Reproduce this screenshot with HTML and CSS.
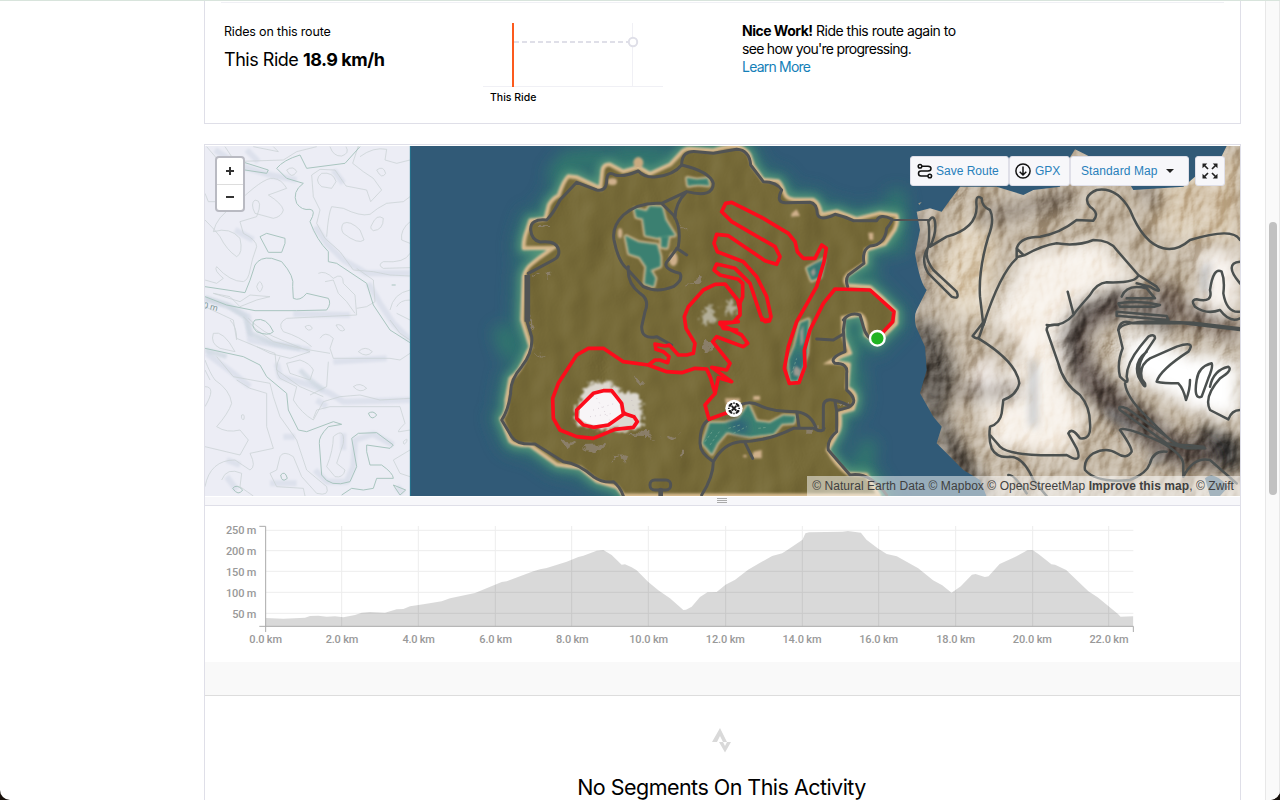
FILE: index.html
```html
<!DOCTYPE html>
<html lang="en">
<head>
<meta charset="utf-8">
<title>Activity</title>
<link rel="stylesheet" href="styles.css">
</head>
<body>
<div class="window">
<main class="content">
  <section class="card matched">
    <div class="rides">
      <p class="label">Rides on this route</p>
      <p class="speed">This Ride <b>18.9 km/h</b></p>
    </div>
    <div class="trend">
      <svg width="180" height="66" viewBox="0 0 180 66">
        <path d="M0 64.5H180" stroke="#f0f0f5"/>
        <path d="M149.5 1V64" stroke="#f0f0f5"/>
        <path d="M31 20H145" stroke="#dfdfe8" stroke-width="2" stroke-dasharray="5 3"/>
        <path d="M30 1V65" stroke="#fc5a1d" stroke-width="2"/>
        <circle cx="150" cy="20" r="4.2" fill="#fff" stroke="#dfdfe8" stroke-width="2"/>
      </svg>
      <span class="tick">This Ride</span>
    </div>
    <div class="message"><span class="m1"><b>Nice Work!</b> Ride this route again to</span><span class="m2">see how you're progressing.</span><a class="m3">Learn More</a></div>
  </section>

  <section class="card activity">
    <div class="map">
      <svg class="terrain" viewBox="-825 18 3105 1050" width="1035" height="350">
        <defs>
          <filter id="b4" x="-20%" y="-20%" width="140%" height="140%"><feGaussianBlur stdDeviation="3"/></filter>
          <filter id="b15" x="-30%" y="-30%" width="160%" height="160%"><feGaussianBlur stdDeviation="12"/></filter>
          <filter id="b30" x="-50%" y="-50%" width="200%" height="200%"><feGaussianBlur stdDeviation="24"/></filter>
          <filter id="rock" x="0" y="0" width="100%" height="100%" color-interpolation-filters="sRGB">
            <feTurbulence type="fractalNoise" baseFrequency=".008 .0055" numOctaves="4" seed="8"/>
            <feColorMatrix values="0 0 0 0 0  0 0 0 0 0  0 0 0 0 0  1 0 0 0 0"/>
            <feDiffuseLighting surfaceScale="36" diffuseConstant="1.08" lighting-color="#ffffff"><feDistantLight azimuth="220" elevation="34"/></feDiffuseLighting>
          </filter>
          <filter id="grass" x="0" y="0" width="100%" height="100%" color-interpolation-filters="sRGB">
            <feTurbulence type="fractalNoise" baseFrequency=".01 .008" numOctaves="2" seed="3"/>
            <feColorMatrix values="0 0 0 0 0  0 0 0 0 0  0 0 0 0 0  1 0 0 0 0"/>
            <feDiffuseLighting surfaceScale="7" diffuseConstant="1" lighting-color="#ffffff"><feDistantLight azimuth="200" elevation="30"/></feDiffuseLighting>
          </filter>
          <filter id="snow" x="-10%" y="-10%" width="120%" height="120%">
            <feTurbulence type="fractalNoise" baseFrequency=".1" numOctaves="2" seed="4" result="n"/>
            <feDisplacementMap in="SourceGraphic" in2="n" scale="45" xChannelSelector="R" yChannelSelector="G"/>
            <feGaussianBlur stdDeviation="2.500"/>
          </filter>
          <filter id="rough" x="-10%" y="-10%" width="120%" height="120%">
            <feTurbulence type="fractalNoise" baseFrequency=".035" numOctaves="3" seed="9" result="n"/>
            <feDisplacementMap in="SourceGraphic" in2="n" scale="40" xChannelSelector="R" yChannelSelector="G"/>
            <feGaussianBlur stdDeviation="1.500"/>
          </filter>
          <path id="isle" d="M125 540L130 410Q135 385 155 370L180 350L215 325L130 326Q128 300 140 270L150 240L195 235L205 195Q215 175 235 165Q250 120 265 107L290 110L360 143L366 90Q370 70 390 72L430 93L475 80L510 100L570 72L600 40Q610 25 630 25L700 30Q735 18 770 18Q800 25 810 45L820 75L850 118L895 122Q905 130 915 160Q920 175 940 177L1000 178Q1020 190 1025 222L1070 213Q1100 225 1130 235L1200 218L1250 225Q1258 240 1245 270L1215 313L1160 330L1158 370L1105 405Q1090 420 1103 435L1170 440L1205 470L1250 515L1250 550L1190 610L1155 585Q1160 535 1140 525L1090 535L1092 590L1112 640Q1080 650 1055 665Q1080 665 1108 672L1103 742Q1130 755 1128 780L1120 808L1080 820Q1085 860 1075 877L1045 930Q1070 975 1105 1000L1160 1003L1200 1068H430L410 1043L350 1025L300 985L230 975L150 917Q110 920 90 905L62 835Q80 820 78 780L90 715Q120 695 140 640L150 620Z"/>
          <path id="range" d="M1310 215L1350 205L1385 215L1410 180L1440 140L1550 140L1630 165L1660 150L1740 140L1765 60L1785 28L1820 45L1860 68L1900 48L1925 90L1960 150L2110 140L2180 80L2225 48L2240 18H2285V1070H1520L1500 1020L1450 990L1370 910L1385 860L1360 830L1320 760L1340 690L1335 620L1308 560Q1300 530 1310 510L1340 450Q1320 430 1305 340L1320 270Z"/>
          <clipPath id="isleClip"><use href="#isle"/></clipPath>
          <clipPath id="rangeClip"><use href="#range"/></clipPath>
          <clipPath id="topoClip"><rect x="-825" y="18" width="615" height="1050"/></clipPath>
          <clipPath id="seaClip"><rect x="-210" y="18" width="2490" height="1050"/></clipPath>
        </defs>

        <rect x="-210" y="18" width="2490" height="1050" fill="#315a77"/>

        <!-- paper map west of the island -->
        <g clip-path="url(#topoClip)">
        <g transform="translate(-840 0)" fill="none">
          <rect x="15" y="18" width="615" height="1050" fill="#ecedf5"/>
          <g stroke="#dde1ec" stroke-width="18" stroke-linejoin="round" filter="url(#b4)">
            <path d="M130 80L210 105L290 120M345 260L380 310L430 360L500 400L630 400M15 475L90 500L145 530L150 600L230 615L330 630M20 640L100 700L150 740M230 670L240 710L330 735L390 760L430 785L630 780M505 430L540 490L580 550L630 600M280 522L450 525M400 665L560 655M400 90L430 130M345 990L380 1025L440 1025L460 980L465 900L520 882L580 915M430 880V930M210 1030H290M250 890H285M80 960L120 975M45 30L100 65M140 30L175 65M80 1010L110 1050M590 1040L610 1060M105 270L160 300M350 780L380 800"/>
          </g>
          <path d="M15 475L80 495L135 530L150 580L220 610L300 625M300 690L330 720L370 750M15 630L80 650" stroke="#cdd7e0" stroke-width="15" opacity=".7" filter="url(#b4)"/>
          <g stroke="#cbd3d6" stroke-width="2.4" stroke-linejoin="round">
            <path d="M20 20L50 55L95 65L250 60L290 35L350 20M390 20Q400 50 425 48Q450 40 438 20M75 20L95 50M160 20L235 35L220 20M475 18L458 70L490 95L520 115L545 150L512 185L500 150L438 138L405 90L360 88L335 105L340 170L360 210L350 250L375 295L420 335L460 390L520 395L570 405L630 408M480 50Q520 20 560 28L555 60L590 70L630 60"/>
            <path d="M365 100Q400 95 408 125L395 145L365 140Q340 120 365 100ZM530 90Q550 75 557 100Q545 120 530 90ZM260 90Q280 75 290 95Q275 120 260 90ZM430 250Q450 240 480 270L492 300Q475 315 430 280Q420 265 430 250ZM515 255Q530 220 550 235Q550 270 520 272Q508 265 515 255ZM170 440Q180 410 188 440Q180 470 170 440ZM315 560Q330 550 337 565Q325 578 315 560ZM408 555Q425 550 434 570Q420 580 408 555ZM475 635Q495 615 517 635Q500 655 475 635ZM460 740Q480 725 500 745Q480 762 460 740ZM125 825Q135 820 132 838Q122 840 125 825Z"/>
            <path d="M15 160L25 185L50 185M15 240Q45 270 60 290Q80 330 110 350Q130 340 120 295Q90 260 40 275Q50 230 100 200Q190 110 220 115Q245 118 260 145L205 165Q245 190 250 210Q245 230 220 235L165 220Q150 190 165 180Q190 180 170 230L120 245L130 280Q170 300 170 320Q155 360 150 390Q145 420 130 425Q90 425 50 380Q40 390 70 415L50 430L15 420"/>
            <path d="M380 290Q385 220 395 200L430 205Q480 230 510 223Q530 205 560 190L610 185L630 170M630 245Q600 270 605 300L630 310M630 340Q615 370 550 365Q530 375 550 385L630 383M355 400Q375 390 400 415Q430 395 430 430L465 465L470 525L260 535Q230 550 250 575Q300 590 335 620M375 425L400 420L415 460L440 485L465 520M470 505L500 500L525 485L520 420L470 385M570 510Q580 460 630 450M590 500Q600 480 630 480M590 520L630 540M570 540L600 580L630 600"/>
            <path d="M40 460L90 470L120 500L170 480L210 470L150 465L120 485L40 460M130 530L170 570L220 605L300 625L390 640M90 540Q110 560 110 595L170 620L225 640L230 690L300 740L370 770M145 535Q190 580 245 600L330 635L270 655L210 640L170 620M260 670L300 660Q330 670 340 690L330 720L270 700ZM240 650Q220 690 240 715L290 740L280 780Q305 820 340 840L370 785L420 770L480 765L540 780L630 775M360 595Q375 570 400 595L390 625L400 655L570 655L600 660L630 640M385 665L380 740L330 765M40 580Q70 570 105 635L60 625Q30 610 40 580M15 660Q30 700 45 720Q90 750 95 790Q85 820 50 860Q80 880 120 870L145 900L120 945L15 920"/>
            <path d="M15 740Q50 740 15 800M110 720L150 745L200 760L200 860L220 925L150 940Q170 980 150 990L105 960Q30 960 15 1040M50 650L100 710L210 730L220 770L240 830L290 900L320 990L380 1040Q390 1070 350 1060L305 1010L280 950Q250 930 240 950L230 990L210 1000L230 1040L310 1045L315 1068M65 1020Q80 980 125 1000L120 1040L160 1068M340 835L350 810L390 800L600 800L615 850Q585 880 600 875L630 870M630 930L580 960L600 1000L630 1010M610 905Q625 890 620 905Q610 920 610 905ZM380 980Q400 930 400 890Q435 860 430 910L410 970L435 990Q430 1015 405 1010ZM15 500L100 540L110 600M15 690L30 720"/>
          </g>
          <g stroke="#a9c5bf" stroke-width="3" stroke-linejoin="round">
            <path d="M480 20L435 70L320 85L300 45Q250 60 230 85L260 115L310 130Q275 155 290 190Q305 212 330 208Q350 210 330 245Q350 300 385 335L385 365L410 370L500 430L520 495L570 570L630 608M135 68L205 90L200 100L135 90M15 440L135 458Q150 425 165 375Q180 350 215 355L245 365Q285 410 278 440L280 475Q300 485 320 460L385 475Q395 490 380 510L290 512L165 512L80 495L15 470"/>
            <path d="M180 290L200 280L255 295L255 310L245 337L205 337ZM165 540Q200 530 220 575Q205 590 170 575Q150 555 165 540ZM15 625L130 650L180 675L200 710L260 760L265 810L295 870L320 875L400 845L425 853L385 860Q355 890 358 910L365 1005Q390 1045 450 1025L470 980L455 895L475 880L530 878L580 915L570 925L500 915L500 935L510 975L545 975Q580 1000 580 1015L530 1015L520 1045L490 1050L455 1045L425 1065M505 820Q520 810 530 825Q515 845 505 820ZM242 1005Q255 990 262 1015Q245 1030 242 1005ZM98 1045Q110 1030 128 1050Q115 1070 98 1045ZM580 1035L600 1065L617 1050ZM575 435H587"/>
          </g>
          <text x="8" y="504" transform="rotate(14 12 505)" class="contour">0 m</text>
        </g>
        </g>
        <path d="M-209 18V1068" stroke="#23758f" stroke-width="3"/>

        <!-- shallow water -->
        <g clip-path="url(#seaClip)">
        <g filter="url(#b30)" opacity=".8">
          <use href="#isle" fill="none" stroke="#2d706d" stroke-width="66"/>
          <path d="M215 120L260 60L380 45M400 40L560 45M1250 150V340M60 560L90 650M1170 900L1140 1000L1200 1030M1120 720L1150 700M1110 580L1140 630M1140 390L1190 400" fill="none" stroke="#31806a" stroke-width="50"/>
        </g>
        <use href="#isle" fill="none" stroke="#56997a" stroke-width="28" filter="url(#b15)"/>
        </g>
        <g filter="url(#b4)">
          <use href="#isle" fill="#75663e" stroke="#dcc096" stroke-width="9" stroke-linejoin="round"/>
          <ellipse cx="475" cy="68" rx="15" ry="17" fill="#c9aa80"/>
        </g>
        <g clip-path="url(#isleClip)">
          <rect x="50" y="0" width="1250" height="1080" fill="#766a38"/>
          <rect x="50" y="0" width="1250" height="1080" filter="url(#grass)" style="mix-blend-mode:soft-light" opacity=".55"/>
          <use href="#isle" fill="none" stroke="#d6b98d" stroke-width="15" filter="url(#b4)"/>
        </g>

        <!-- inland lakes and bare ground -->
        <g stroke="#cfb48a" stroke-width="14" fill="#cfb48a" filter="url(#b4)" stroke-linejoin="round">
          <path id="lakes" d="M465 207L500 215L510 200L545 202L555 240L583 285L530 292L497 285L490 235L470 230ZM438 290L475 308L530 315L540 350L540 378L510 390L525 415L520 438L495 430L500 380L480 350L448 340ZM545 290L565 292L560 322L545 320ZM622 115L650 120L682 117L686 135L655 132L625 136ZM980 640L960 700L950 722L932 720L928 660L945 620L962 550L985 540Z"/>
          <path id="basin" d="M670 910L690 850L735 850L775 840L805 795L828 845L870 850L910 828L945 830L940 848L905 850L880 880L810 888L740 875L710 910L695 940Z"/>
          <path d="M982 385L1030 360L1020 410L995 420Z"/>
        </g>
        <g fill="#3b8071" filter="url(#b4)" stroke="#4a8c79" stroke-width="4"><use href="#lakes"/><use href="#basin"/><path d="M982 385L1030 360L1020 410L995 420Z"/></g>
        <g fill="#cfb08b" filter="url(#b4)"><ellipse cx="580" cy="357" rx="13" ry="21"/><ellipse cx="420" cy="280" rx="7" ry="15"/><ellipse cx="397" cy="125" rx="14" ry="10"/><path d="M935 220L950 208L960 228L933 230ZM1165 278H1180V300H1168ZM820 935L845 930V955H815ZM790 945H800V952H790ZM820 768H840V780H820ZM735 775H780V800H740Z"/></g>
        <path d="M745 850L770 838L800 840L805 880L770 880ZM945 640L960 630L968 670L950 712L935 705ZM1000 380L1025 370L1010 410Z" fill="#2f6078" filter="url(#b15)"/>
        <path d="M675 905L700 870M690 915L718 875M745 865L780 855M760 880L800 860M835 865L860 862M935 700L950 655" stroke="#79a793" stroke-width="2" stroke-dasharray="8 6"/>
        <path d="M940 690L948 677L963 690L960 710L942 706ZM960 575L970 555V605L962 620ZM992 395L1003 383L1007 400L998 410Z" fill="#9c9a91" filter="url(#b4)"/>
        <g filter="url(#rough)" fill="#8f8372" opacity=".85">
          <path d="M240 900L280 905L270 930L250 925ZM310 915L385 912L365 932L325 945ZM440 878L500 882L540 895L500 888L460 887ZM620 440L655 400L665 432L635 428L618 450ZM670 640L680 610L706 598L690 630ZM1075 783L1110 783V792H1078ZM560 897L595 883L570 902ZM605 935H615V955H605ZM160 395L175 402L160 410ZM195 395L215 395L205 435V415ZM150 520L160 545L150 565ZM465 700L485 725H470ZM165 630L195 650L180 645ZM180 255L205 255L180 268ZM430 945L445 950L435 975ZM370 1000L400 990ZM600 250L625 285L605 265ZM980 865L1010 862V872H985ZM400 950L430 945L390 965Z"/>
        </g>
        <g filter="url(#snow)"><path d="M290 805L315 745L335 730L390 725L425 755L470 760L485 790L485 865L430 870L340 865L285 850Z" fill="#dcd8d0"/><path d="M665 530L680 505L690 490L702 515L712 545L665 555ZM733 500L757 475L773 520L735 520Z" fill="#b3ae98"/></g>
        <path d="M300 800Q370 725 415 780L425 825Q350 880 300 835Z" fill="#f8f5f7"/>
        <path d="M315 785L365 755M340 810L405 790M330 830L400 820M350 775L395 850M455 780L470 840M380 725L430 755" stroke="#b5a7b5" stroke-width="2" stroke-dasharray="2 13"/>

        <!-- eastern mountains -->
        <g clip-path="url(#rangeClip)">
          <rect x="1290" y="0" width="1000" height="1080" fill="#bdaf9b"/>
          <g filter="url(#b30)">
            <path d="M1640 340L1860 300L1970 420L1860 450L1770 560L1740 720L1820 830L1760 960L1530 920L1500 780L1630 640L1540 540Z" fill="#f6efe6"/>
            <path d="M1980 180L2060 300L2180 300L2280 310V30L2050 120Z" fill="#d3c2a9"/>
            <path d="M2050 330L2160 350L2160 510L2270 510V340Z" fill="#f8f2ec"/>
            <path d="M1470 180L1550 320L1520 540L1420 520L1370 390Z" fill="#ddceb6"/>
            <path d="M1290 540L1370 550L1430 700L1390 830L1540 1070H1470L1350 860L1290 720Z" fill="#4d4741"/>
            <path d="M1420 760L1620 750M1310 220V500M1480 240L1780 170M1980 70L2030 210" fill="none" stroke="#7d7062" stroke-width="45"/>
            <path d="M2080 540L1930 480L1830 520L1780 590L1810 700L1890 780L2080 930L2280 950" fill="none" stroke="#4c413b" stroke-width="80"/>
            <path d="M2030 440L2130 530L2280 580" fill="none" stroke="#6a5a4d" stroke-width="60"/>
            <path d="M1930 580L2000 580L2080 625L2190 650L2280 660V840L2160 820L2050 760L1930 700Z" fill="#ffffff"/>
            <path d="M2150 850L2280 900V1000L2210 970Z" fill="#202123"/>
            <path d="M1480 680L1530 640L1560 740L1480 740Z" fill="#f1eae6"/>
            <path d="M1950 470L2020 450L2040 500L1920 540Z" fill="#a19890"/>
          </g>
          <rect x="1290" y="0" width="1000" height="1080" filter="url(#rock)" style="mix-blend-mode:soft-light" opacity=".75"/>
          <path d="M1660 660V860M2180 460Q2160 400 2190 375M1880 810L1960 870M2010 970L2050 940" stroke="#8793a0" stroke-width="10" fill="none" filter="url(#b15)"/>
          <path d="M2175 1015Q2200 990 2245 1040L2220 1068H2190Z" fill="#49687c"/>
        </g>
        <path d="M1315 190L1325 186L1318 195Z" fill="#a59a89"/>

        <!-- roads -->
        <g fill="none" stroke="#515354" stroke-width="9" stroke-linejoin="round" stroke-linecap="round">
          <path d="M145 400L220 360Q240 350 236 330Q230 300 180 306Q155 300 152 270Q150 235 200 240Q220 220 240 180L290 127L350 150Q378 155 380 125Q380 90 405 105Q430 112 475 93Q495 115 530 110Q580 105 605 75Q605 30 650 35L700 40L770 28Q808 30 812 75L850 125Q890 125 905 150Q885 190 920 188L990 187Q1010 190 1012 222Q1020 245 1065 223Q1095 230 1120 242H1190Q1200 220 1235 237Q1240 240 1220 265Q1215 315 1170 318Q1145 330 1152 370L1105 405Q1095 420 1103 440"/>
          <path d="M1240 240H1345" stroke-width="6"/>
          <path d="M142 405V545" stroke-width="17" stroke-linecap="butt"/>
          <path d="M140 540L155 590Q160 635 125 680Q90 720 92 760Q85 810 65 840L95 890Q110 915 165 912Q210 940 250 965Q295 970 340 1010Q370 1030 400 1025Q420 1040 430 1068"/>
          <path d="M545 190Q475 185 430 225Q395 260 402 300Q415 365 440 385L490 440Q530 460 580 440Q610 420 600 400Q540 385 565 360L595 320Q605 260 580 225ZL620 155Q700 175 700 130Q690 95 605 75M620 155Q585 190 585 235M590 325L620 345M445 380Q440 430 480 460Q510 480 495 515L485 560Q485 600 530 590L575 615"/>
          <g transform="translate(660 540)"><path d="M350 57L400 60L430 42M435 -5L430 30L435 95Q385 115 405 130Q445 130 440 160V210Q480 245 445 262L410 272L410 335Q380 360 385 390L450 465Q510 455 560 525M370 330L370 260Q370 220 450 258M410 272L405 245M372 325Q365 340 340 325L280 325Q200 365 120 365Q70 370 40 425Q0 400 0 370Q0 310 30 297M120 255Q150 240 180 257Q215 275 290 275Q335 280 350 330M290 275L297 320M40 425Q40 470 5 525M135 368L158 415"/></g>
          <rect x="510" y="1020" width="62" height="30" rx="14"/><path d="M542 1050V1068" stroke-width="14"/>
          <path d="M1090 540Q1110 515 1140 525L1150 560Q1160 600 1190 598"/>
        </g>
        <g fill="none" stroke="#4b504f" stroke-width="7.500" stroke-linejoin="round" stroke-linecap="round" transform="translate(1260 0)">
          <path d="M85 320Q90 270 85 245Q100 220 105 245Q110 280 90 320L140 290Q230 265 230 200Q225 160 245 175Q245 200 270 210Q285 240 265 290Q235 390 240 470L250 555Q300 400 350 355L350 325Q360 290 420 290Q480 280 530 240L580 242Q600 220 570 200Q545 170 590 150Q650 140 690 210Q730 310 790 325Q830 335 870 300Q1000 260 1020 300M85 320Q70 350 100 390L170 455Q180 480 155 470L85 400Q60 360 85 320M355 350L375 345Q430 315 470 310Q530 320 580 300Q630 300 650 330L715 405Q710 430 620 427Q590 430 570 465Q530 510 520 525Q490 560 440 555M350 325L370 345M503 455L520 520M715 405L770 440Q790 465 750 440L710 430M665 470Q680 430 740 445L765 475L680 475M655 490Q720 480 780 495L765 500L660 500ZM650 515L800 528L805 540L650 527ZM655 570Q665 540 800 545L880 548L1020 565M930 450Q940 380 965 395Q975 420 970 460Q980 520 1020 515M930 450Q940 490 890 478Q870 480 885 500Q920 525 960 510Q990 550 1020 535M1020 365Q970 370 1020 430"/>
          <g transform="translate(0 540)"><path d="M255 0L238 50Q230 60 218 48L255 0M235 55Q350 125 358 190Q350 225 310 240L305 280Q300 310 270 320Q265 360 275 385Q290 415 330 410Q370 410 400 480L440 528M270 345L300 380Q330 410 500 405Q550 435 530 385L505 340Q515 320 540 355Q575 360 570 310Q570 260 540 225Q490 190 475 130L440 30Q440 10 475 15M655 30Q660 -5 700 10L850 10L1020 30M655 30L668 85Q650 130 660 170Q690 200 680 170Q680 130 720 80L745 50Q765 40 765 55L735 100Q700 150 735 190Q740 215 715 170Q700 125 740 95M730 190Q710 140 750 115L830 80Q890 60 865 95Q780 150 770 185Q790 190 835 190Q850 205 858 240Q870 210 870 180M890 180Q895 140 935 130Q940 140 925 175L905 230Q880 240 890 180M930 200Q940 150 985 140Q1000 150 960 175Q910 230 930 270L985 298Q995 270 1020 270M675 190Q680 230 730 280L800 350Q830 380 860 375L910 380L915 385L860 385L800 370L660 270Q650 255 680 265L800 350M660 330Q665 315 780 365Q845 400 850 430V470M660 330Q695 380 695 395Q680 420 650 400Q620 380 580 400Q550 420 555 450Q590 490 690 480Q740 460 750 430Q760 390 800 395M325 465Q340 460 380 520M850 470Q880 410 930 420L1010 490"/></g>
        </g>

        <!-- ride track -->
        <path d="M1192 595L1238 545L1242 515L1170 450L1065 447L1030 490L990 570L973 630L975 680L957 728L928 730L913 685L925 620L950 545L1010 440L1032 365L1039 325L1025 315L1005 355H970L952 335L945 305L925 280L850 235L755 187L737 190L725 215L755 245L885 320L900 350L890 373L855 362L745 287L710 283L702 310L712 335L790 365L830 410L860 470L873 530L868 543L855 545L843 530L810 430L765 385L710 372L702 390L720 405L775 418L788 430V470L780 488L780 525L760 547H720L730 565L770 570M780 510L773 480L735 432L705 433L670 450L625 500L613 530L618 565L645 610L640 640L620 645L595 645L568 615L555 618L525 612L528 628L550 635L567 650L563 668L540 660L525 660L505 675M505 675L430 665L370 625H325L290 645L235 730L218 775L220 835L240 870L290 890L340 895L405 868L460 862L472 845L462 830L430 820L425 790L395 752H370L340 760L290 810V835L310 855L340 862L385 855L435 820M505 675L560 695L605 698L645 685L680 687L692 715L705 760L675 795L687 838L745 817M865 540L845 540M775 545L720 552L785 585L803 610L790 620L710 590L698 605L750 670L740 690L695 682L755 725L715 713L705 762" fill="none" stroke="#fc0c1b" stroke-width="11" stroke-linejoin="round" stroke-linecap="round"/>
        <circle cx="1192" cy="595" r="22" fill="#20b321" stroke="#fff" stroke-width="7"/>
        <g transform="translate(762 805)"><circle r="26" fill="#fff"/><path d="M-16 -5V-10L-9 -16H-5V-12L-10 -5ZM5 -16H9L16 -10V-5H10L5 -12ZM-16 5H-10L-5 12V16H-9L-16 10ZM16 5V10L9 16H5V12L10 5ZM-5 -9L0 -4L5 -9L9 -5L4 0L9 5L5 9L0 4L-5 9L-9 5L-4 0L-9 -5ZM-2 -18H2V-13H-2ZM-2 13H2V18H-2ZM-18 -2H-13V2H-18ZM13 -2H18V2H13Z" fill="#1d1d1d"/></g>
      </svg>

      <div class="zoomctl"><svg width="26" height="26"><path d="M9 13H17M13 9V17" stroke="#333" stroke-width="2"/></svg><svg class="minus" width="26" height="26"><path d="M9 12H17" stroke="#333" stroke-width="2"/></svg></div>
      <div class="tools">
        <a class="btn save"><svg width="16" height="16" viewBox="0 0 16 16" fill="none" stroke="#111" stroke-width="1.5"><circle cx="3" cy="3.2" r="1.8"/><path d="M5 3.2H11Q14 3.2 14 5.5Q14 8 11 8H4Q1.5 8 1.5 10.5Q1.5 13 4 13H11"/><circle cx="12.8" cy="13" r="1.8"/></svg><span>Save Route</span></a>
        <a class="btn gpx"><svg width="16" height="16" viewBox="0 0 16 16" fill="none" stroke="#111" stroke-width="1.5"><circle cx="8" cy="8" r="7.1"/><path d="M8 3.5V12M4.7 8.7L8 12L11.3 8.7"/></svg><span>GPX</span></a>
        <a class="btn type"><span>Standard Map</span><i class="caret"></i></a>
        <a class="btn full"><svg width="16" height="16" viewBox="0 0 16 16" fill="#222" stroke="#222" stroke-width="1.7"><path d="M2 2L6 6M14 2L10 6M2 14L6 10M14 14L10 10"/><path stroke="none" d="M.5 .5H5.3L.5 5.3ZM15.500 .5V5.300L10.700 .5ZM.5 15.500V10.700L5.300 15.500ZM15.500 15.500H10.700L15.500 10.700Z"/></svg></a>
      </div>
      <div class="credit"><span>© Natural Earth Data © Mapbox © OpenStreetMap <b>Improve this map</b>, © Zwift</span></div>
    </div>
    <div class="grip"><svg width="10" height="6"><path d="M0 .5H10M0 2.500H10M0 4.500H10" stroke="#aaa"/></svg></div>
    <div class="elevation">
      <svg width="1035" height="156" viewBox="15 18 3105 468">
        <path d="M197 91H2800M197 152H2800M197 214H2800M197 277H2800M197 340H2800M425 78V379M655 78V379M886 78V379M1115 78V379M1345 78V379M1577 78V379M1807 78V379M2036 78V379M2267 78V379M2498 78V379M2726 78V379" stroke="#ededed" stroke-width="3" fill="none"/>
        <path fill="#000" fill-opacity=".15" d="M197 379V354L250 356L315 353L330 348L355 347L380 350L405 349L430 352L465 345L485 338L510 336L555 338L590 328L610 327L630 319L670 313L725 304L750 295L825 279L905 246L920 244L1000 214L1020 208L1040 204L1100 185L1135 171L1150 167L1190 152L1210 150L1235 165L1265 194L1275 193L1295 202L1310 211L1345 246L1375 271L1410 295L1450 330L1458 329L1475 320L1500 291V379Z"/>
        <path fill="#000" fill-opacity=".15" transform="matrix(1.1097 0 0 1 -164.55 0)" d="M1500 379V291L1520 277L1545 276L1569 254L1595 239L1630 209L1660 190L1695 168L1722 160L1735 151L1777 119L1785 100L1795 97L1885 95L1900 93L1935 98L1950 119L1983 147L2005 162L2032 169L2090 205L2130 241L2155 256L2180 278L2205 259L2235 224L2245 222L2270 231L2280 229L2310 192L2350 172L2385 151L2399 150L2415 162L2450 193L2460 194L2490 210L2550 274L2575 292L2630 342L2637 350L2671 349V379Z"/>
        <path d="M178 79H197V396M178 379H2800V396" stroke="#aaa" stroke-width="3" fill="none"/>
        <g class="axis" text-anchor="end"><text x="169" y="102" textLength="91">250 m</text><text x="169" y="165" textLength="91">200 m</text><text x="169" y="228" textLength="91">150 m</text><text x="169" y="291" textLength="91">100 m</text><text x="169" y="354" textLength="72">50 m</text></g>
        <g class="axis" text-anchor="middle"><text x="197" y="429" textLength="98">0.0 km</text><text x="426" y="429" textLength="98">2.0 km</text><text x="656" y="429" textLength="97">4.0 km</text><text x="887" y="429" textLength="98">6.0 km</text><text x="1117" y="429" textLength="98">8.0 km</text><text x="1346" y="429" textLength="117">10.0 km</text><text x="1576" y="429" textLength="117">12.0 km</text><text x="1806" y="429" textLength="117">14.0 km</text><text x="2036" y="429" textLength="117">16.0 km</text><text x="2267" y="429" textLength="117">18.0 km</text><text x="2497" y="429" textLength="117">20.0 km</text><text x="2727" y="429" textLength="117">22.0 km</text></g>
      </svg>
    </div>
    <div class="band"></div>
    <div class="segments">
      <svg width="20" height="25" viewBox="0 0 20 25" fill="#d9d9d9"><path d="M8 0L15 14H11L8 8L5 14H0Z"/><path d="M7 14H11L13 18L15 14H19L13 24.500Z"/></svg>
      <h2>No Segments On This Activity</h2>
    </div>
  </section>
</main>
<aside class="scrollbar"><div class="thumb"></div></aside>
</div>
</body>
</html>
```
FILE: styles.css
```css
* { box-sizing: border-box; }
body { margin: 0; background: #17100b; }
.window { display: flex; justify-content: space-between; height: 800px; background: #fff; border-top: 1px solid #d8e4dc; border-radius: 0 0 10px 10px; overflow: hidden; font-family: Inter, "Liberation Sans", sans-serif; color: #000; }
.content { width: 1037px; margin-left: 204px; display: flex; flex-direction: column; gap: 20px; }
.card { border: 1px solid #dfdfe8; }
.matched { height: 123px; flex: none; border-top: 0; padding: 1px 16px 0; display: flex; position: relative; }
.matched::before { content: ""; position: absolute; left: 16px; right: 16px; top: 1px; border-top: 1px solid #f0f0f5; }
p { margin: 0; }
.rides { width: 264px; padding: 21px 0 0 3px; }
.label { font-size: 12.5px; line-height: 18px; letter-spacing: -.17px; }
.speed { font-size: 18px; line-height: 26px; margin-top: 6px; letter-spacing: -.48px; white-space: nowrap; }
.trend { width: 252px; padding-top: 20px; margin-left: -2px; display: flex; flex-direction: column; align-items: flex-start; }
.trend svg { display: block; }
.tick { font-size: 10.5px; font-weight: 500; line-height: 15px; margin: 2px 0 0 7px; letter-spacing: 0; }
.message { display: flex; flex-direction: column; align-items: flex-start; padding: 20px 0 0 7px; font-size: 14px; line-height: 18px; white-space: nowrap; letter-spacing: -.5px; }
.m2 { letter-spacing: -.7px; }
.m3 { color: #1480b8; letter-spacing: -.78px; }
.activity { flex: none; padding-top: 1px; display: flex; flex-direction: column; }
.map { position: relative; height: 350px; overflow: hidden; }
.terrain { display: block; }
.contour { font: 25px "Noto Sans", sans-serif; fill: #76928f; }
.zoomctl { position: absolute; left: 10px; top: 10px; width: 30px; height: 56px; background: #fff; border: 2px solid #b9bac2; border-radius: 4px; display: flex; flex-direction: column; }
.zoomctl svg { display: block; }
.minus { border-top: 1px solid #ddd; }
.tools { position: absolute; right: 15px; top: 10px; display: flex; }
.btn { height: 30px; background: #f7f7fa; border: 1px solid #dfdfe8; border-radius: 3px; display: flex; align-items: center; gap: 3px; color: #2780bb; font: 12px "Liberation Sans", sans-serif; white-space: nowrap; }
.save { width: 99px; padding-left: 6px; }
.gpx { width: 61px; padding-left: 5px; gap: 4px; }
.type { width: 119px; padding-left: 10px; gap: 8px; letter-spacing: .1px; }
.full { width: 30px; margin-left: 6px; padding-left: 6px; }
.caret { border: 4px solid transparent; border-top: 4px solid #222; border-bottom: 0; }
.credit { position: absolute; right: 0; bottom: 0; height: 20px; width: 433px; background: rgba(255,255,255,.5); padding: 0 6px 0 5px; font: 12px/20px "Liberation Sans", sans-serif; letter-spacing: .07px; color: #404040; white-space: nowrap; text-align: right; }
.grip { height: 10px; background: #f7f7fa; border-top: 1px solid #fff; border-bottom: 1px solid #dfdfe8; display: flex; justify-content: center; padding: 1px 1px 0 0; }
.grip svg { margin-right: 1px; }
.elevation { height: 156px; }
.elevation svg { display: block; }
.axis { font: 500 33px Roboto, sans-serif; fill: #999; }
.band { height: 34px; background: #f9f9f9; border-bottom: 1px solid #ddd; }
.segments { height: 110px; display: flex; flex-direction: column; align-items: center; padding: 32px 2px 0 0; }
h2 { margin: 17px 0 0; font-size: 21.5px; line-height: 34px; font-weight: 400; letter-spacing: -.53px; white-space: nowrap; }
.scrollbar { width: 15px; background: #fafafa; border: solid #e8e8e8; border-width: 0 1px; padding: 221px 0 0 3px; }
.thumb { width: 8px; height: 273px; border-radius: 4px; background: #c1c1c1; }
```
